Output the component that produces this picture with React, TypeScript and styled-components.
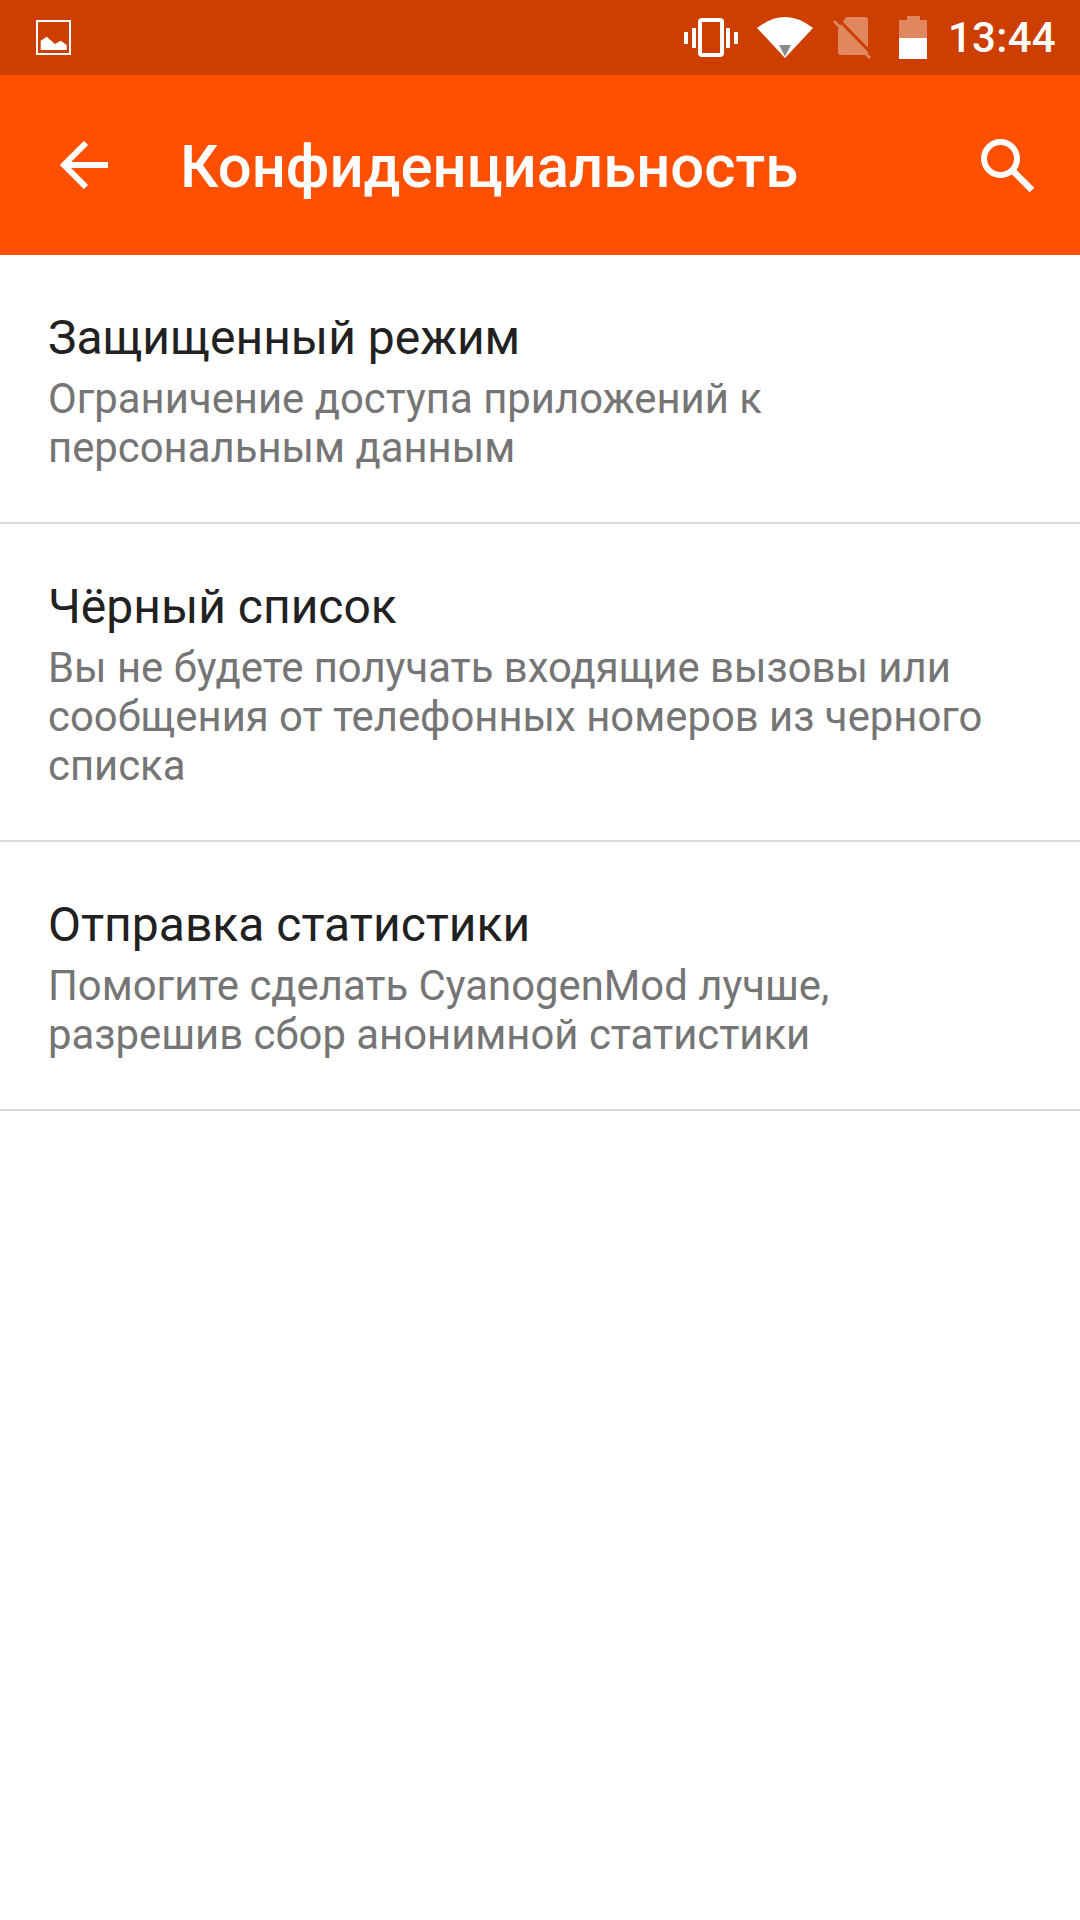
import styled, { createGlobalStyle } from "styled-components";

const Global = createGlobalStyle`
  html, body {
    margin: 0;
    padding: 0;
    background: #fff;
    font-family: Roboto, "Noto Sans", sans-serif;
  }
`;

const Screen = styled.div`
  width: 1080px;
  height: 1920px;
  display: flex;
  flex-direction: column;
  overflow: hidden;
  background: #fff;
`;

const StatusBar = styled.div`
  height: 75px;
  flex: none;
  background: #cc3f00;
  display: flex;
  align-items: center;
  justify-content: space-between;
  padding: 0 24px 0 36px;
  color: #fff;
`;

const StatusGroup = styled.div`
  display: flex;
  align-items: center;
`;

const StatusIcon = styled.svg<{ $gap?: number }>`
  display: block;
  margin-left: ${(p) => p.$gap ?? 0}px;
`;

const Clock = styled.span`
  font-size: 42px;
  font-weight: 500;
  margin-left: 21px;
  letter-spacing: 0.3px;
`;

const AppBar = styled.header`
  height: 180px;
  flex: none;
  background: #ff4f00;
  display: flex;
  align-items: center;
  color: #fff;
  padding: 0 46px 0 60px;
`;

const Title = styled.h1`
  flex: 1;
  margin: 3px 0 0 72px;
  font-size: 59.8px;
  font-weight: 500;
`;

const Row = styled.div<{ $h: number }>`
  padding: 46px 48px 0;
  border-bottom: 2px solid #dcdcdc;
  box-sizing: border-box;
  height: ${(p) => p.$h}px;
`;

const RowTitle = styled.div`
  font-size: 48px;
  line-height: 73px;
  color: #212121;
`;

const RowText = styled.div`
  font-size: 41.85px;
  line-height: 49px;
  color: #757575;
`;

function App() {
  return (
    <Screen>
      <Global />
      <StatusBar>
        <StatusIcon width="36" height="36" viewBox="0 0 36 36">
          <rect x="1" y="1" width="33" height="33" fill="none" stroke="#fff" strokeWidth="2" />
          <path d="M4.700 20.700l6-4 8.300 7.300 5.700-3.300 6 4.300V30h-26z" fill="#fff" />
        </StatusIcon>
        <StatusGroup>
          <StatusIcon width="54" height="39" viewBox="0 0 54 39">
            <path d="M0 14h4v12H0zM8 10h4v20H8zM42 10h4v20h-4zM50 14h4v12h-4z" fill="#fff" />
            <rect x="16" y="2" width="22" height="35" rx="2" fill="none" stroke="#fff" strokeWidth="4" />
          </StatusIcon>
          <StatusIcon $gap={19} width="56" height="41" viewBox="0 0 56 41">
            <path d="M0 11Q28-11 56 11L28 41z" fill="#fff" />
            <path d="M22 28h12l-6 11.500z" fill="#8a8a8a" />
          </StatusIcon>
          <StatusIcon $gap={19} width="40" height="42" viewBox="0 0 40 42">
            <path d="M14 0h19a3 3 0 0 1 3 3v32a3 3 0 0 1-3 3H9a3 3 0 0 1-3-3V12z" fill="#e0875f" />
            <path d="M5 1l36 37" stroke="#cc3f00" strokeWidth="3" />
            <path d="M2 4l36 37" stroke="#e0875f" strokeWidth="3" />
          </StatusIcon>
          <StatusIcon $gap={27} width="28" height="43" viewBox="0 0 28 43">
            <path d="M0 4h8V0h13v4h7v18H0z" fill="#e0875f" />
            <rect y="22" width="28" height="21" fill="#fff" />
          </StatusIcon>
          <Clock>13:44</Clock>
        </StatusGroup>
      </StatusBar>
      <AppBar>
        <svg width="48" height="48" viewBox="0 0 48 48">
          <path d="M48 24H4M26 2L4 24l22 22" fill="none" stroke="#fff" strokeWidth="6" />
        </svg>
        <Title>Конфиденциальность</Title>
        <svg width="54" height="54" viewBox="0 0 54 54">
          <circle cx="20.500" cy="20.500" r="16.500" fill="none" stroke="#fff" strokeWidth="6" />
          <path d="M32 32l20 20" stroke="#fff" strokeWidth="6.500" />
        </svg>
      </AppBar>
      <Row $h={269}>
        <RowTitle>Защищенный режим</RowTitle>
        <RowText>Ограничение доступа приложений к<br />персональным данным</RowText>
      </Row>
      <Row $h={318}>
        <RowTitle>Чёрный список</RowTitle>
        <RowText>Вы не будете получать входящие вызовы или<br />сообщения от телефонных номеров из черного<br />списка</RowText>
      </Row>
      <Row $h={269}>
        <RowTitle>Отправка статистики</RowTitle>
        <RowText>Помогите сделать CyanogenMod лучше,<br />разрешив сбор анонимной статистики</RowText>
      </Row>
    </Screen>
  );
}

export default App;
